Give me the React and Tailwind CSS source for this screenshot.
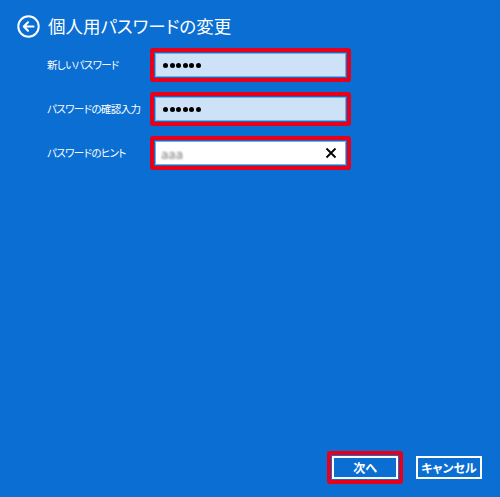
import React from "react";

const font = { fontFamily: '"Noto Sans CJK JP", "Noto Sans", sans-serif' };

function Dots() {
  return (
    <div className="flex items-center gap-[1.5px] pl-[7px]">
      {[0, 1, 2, 3, 4, 5].map((i) => (
        <div key={i} className="w-[5px] h-[5px] rounded-full bg-black" />
      ))}
    </div>
  );
}

function Row({ label, children, white }) {
  return (
    <div className="flex items-center">
      <div className="w-[103px] whitespace-nowrap text-white text-[10.5px] tracking-[-0.6px] leading-none [font-feature-settings:'palt']">
        {label}
      </div>
      <div className="w-[201px] h-[34px] border-[4px] border-[#e8001a] rounded-[3px] p-[1px]">
        <div
          className={
            "w-full h-full border border-[#8fa6c6] flex items-center " +
            (white ? "bg-white" : "bg-[#cde2f6]")
          }
        >
          {children}
        </div>
      </div>
    </div>
  );
}

export default function App() {
  return (
    <div
      className="w-[500px] h-[497px] bg-[#0a6ed3] flex flex-col overflow-hidden"
      style={font}
    >
      <div className="h-[48px] pt-[4px] pl-[17px] flex items-center">
        <svg width="23" height="23" viewBox="0 0 23 23" className="shrink-0">
          <circle cx="11.5" cy="11.5" r="10.2" fill="none" stroke="white" strokeWidth="2" />
          <path
            d="M16.5 11.5 H7 M11 7.3 L6.8 11.5 L11 15.7"
            fill="none"
            stroke="white"
            strokeWidth="2.2"
            strokeLinecap="round"
            strokeLinejoin="round"
          />
        </svg>
        <div className="ml-[8px] text-white text-[17.5px] tracking-[0px] leading-none [font-feature-settings:'palt']">
          個人用パスワードの変更
        </div>
      </div>

      <div className="flex flex-col gap-[10px] pl-[47px]">
        <Row label="新しいパスワード">
          <Dots />
        </Row>
        <Row label="パスワードの確認入力">
          <Dots />
        </Row>
        <Row label="パスワードのヒント" white>
          <div className="flex-1 pl-[5px] text-[13px] text-[#777777] blur-[1px] leading-none">
            aaa
          </div>
          <svg width="12" height="12" viewBox="0 0 12 12" className="mr-[8px]">
            <path d="M1.5 1.5 L10.5 10.5 M10.5 1.5 L1.5 10.5" stroke="black" strokeWidth="1.8" />
          </svg>
        </Row>
      </div>

      <div className="flex-1" />

      <div className="flex items-center justify-end pr-[18px] pb-[13px] gap-[13px]">
        <div className="border-[4px] border-[#e8001a] rounded-[3px] p-[1px]">
          <div className="w-[66px] h-[23px] border-2 border-white flex items-center justify-center text-white text-[12px] font-bold leading-none [font-feature-settings:'palt']">
            次へ
          </div>
        </div>
        <div className="w-[66px] h-[23px] border-2 border-white flex items-center justify-center text-white text-[12px] font-bold leading-none [font-feature-settings:'palt']">
          キャンセル
        </div>
      </div>
    </div>
  );
}
